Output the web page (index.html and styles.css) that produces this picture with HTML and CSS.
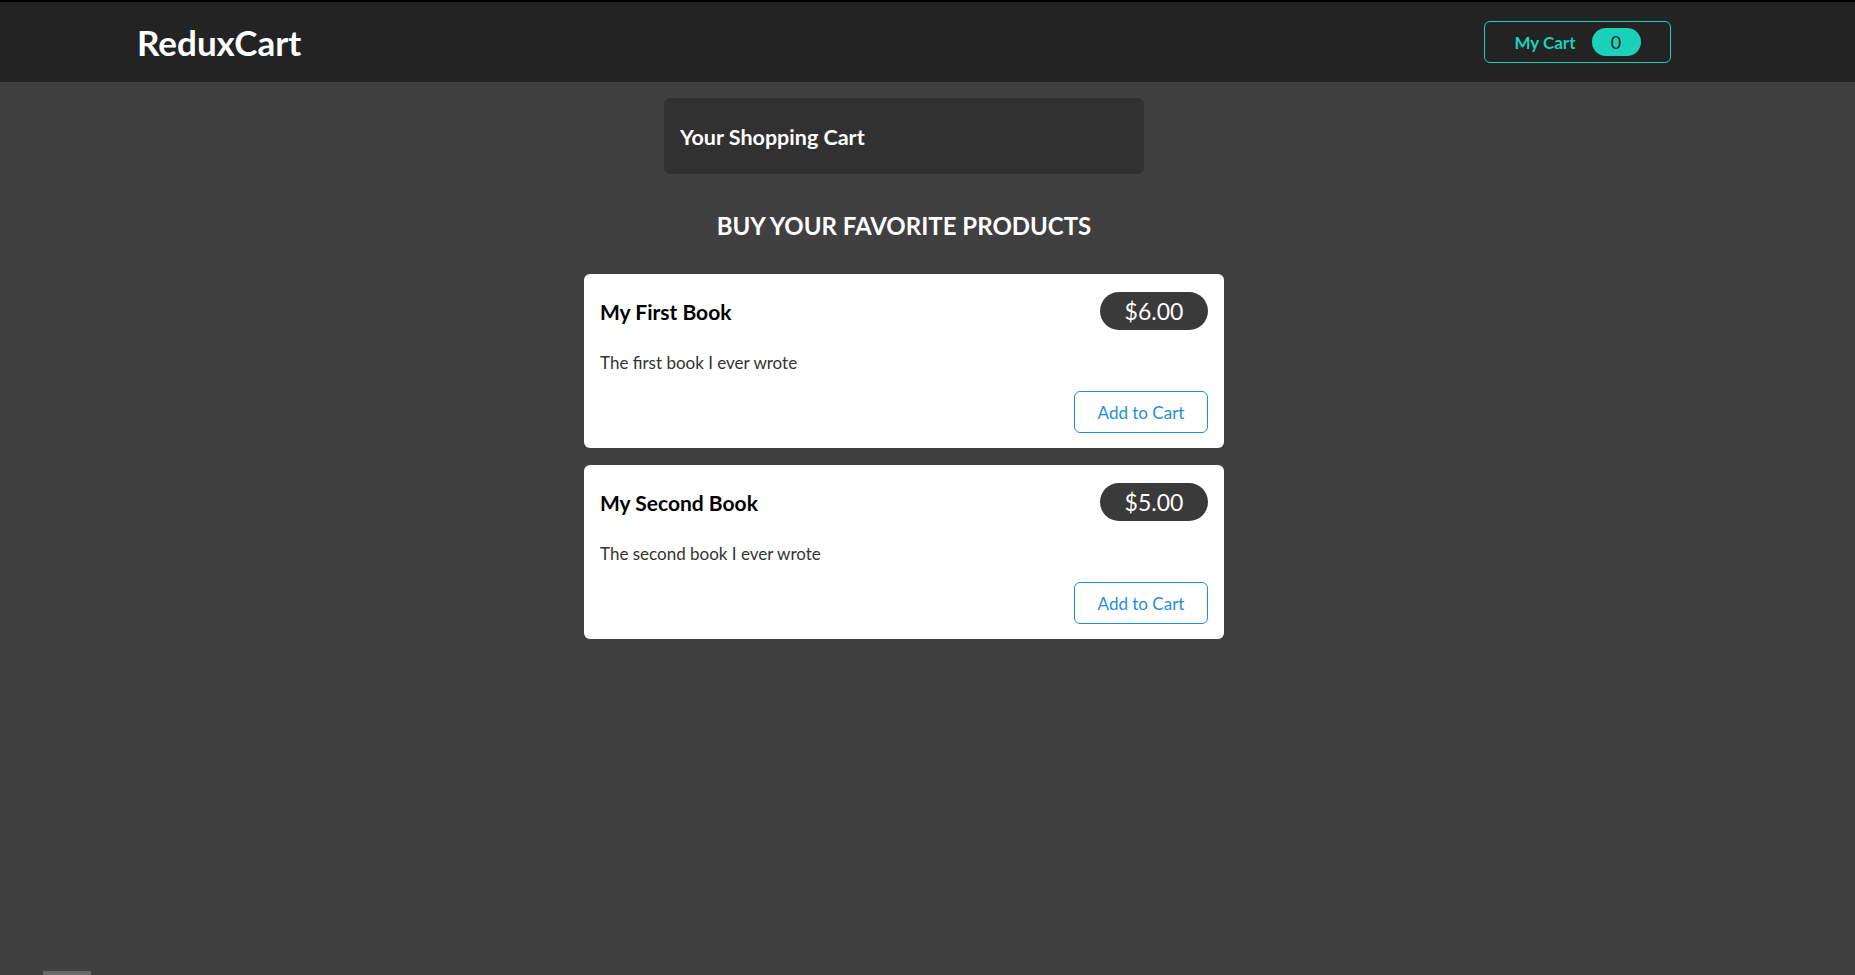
FILE: index.html
```html
<!DOCTYPE html>
<html lang="en">
<head>
<meta charset="utf-8">
<title>ReduxCart</title>
<link rel="stylesheet" href="styles.css">
</head>
<body>
<div class="shell">
  <header class="header">
    <div class="header-inner">
      <h1 class="logo">ReduxCart</h1>
      <button class="cart-button">
        <span>My Cart</span>
        <span class="cart-badge">0</span>
      </button>
    </div>
  </header>
  <main class="main">
    <section class="cart-box">
      <h2>Your Shopping Cart</h2>
    </section>
    <section class="products">
      <h2 class="products-title">BUY YOUR FAVORITE PRODUCTS</h2>
      <ul class="product-list">
        <li class="card">
          <div class="card-head">
            <h3>My First Book</h3>
            <div class="price">$6.00</div>
          </div>
          <p class="desc">The first book I ever wrote</p>
          <div class="actions"><button class="add-btn">Add to Cart</button></div>
        </li>
        <li class="card">
          <div class="card-head">
            <h3>My Second Book</h3>
            <div class="price">$5.00</div>
          </div>
          <p class="desc">The second book I ever wrote</p>
          <div class="actions"><button class="add-btn">Add to Cart</button></div>
        </li>
      </ul>
    </section>
  </main>
</div>
<div class="corner-tab"></div>
</body>
</html>
```
FILE: styles.css
```css
* { box-sizing: border-box; }
html, body { margin: 0; padding: 0; }
body {
  background: #404040;
  font-family: Lato, "Liberation Sans", sans-serif;
  min-height: 975px;
}
.shell { width: 1808px; }
.header {
  background: #232323;
  border-top: 2px solid #000;
  height: 82px;
  width: 1855px;
}
.header-inner {
  width: 1534px;
  margin-left: 137px;
  height: 100%;
  display: flex;
  align-items: center;
  justify-content: space-between;
}
.logo {
  margin: 0;
  color: #fff;
  font-size: 35px;
  font-weight: 700;
}
.cart-button {
  width: 187px;
  height: 42px;
  background: transparent;
  border: 1px solid #1ad1b9;
  border-radius: 6px;
  color: #1ad1b9;
  font-family: inherit;
  font-size: 17px;
  font-weight: 700;
  display: flex;
  align-items: center;
  justify-content: center;
  gap: 16px;
  padding: 0;
}
.cart-badge {
  background: #1ad1b9;
  color: #232323;
  border-radius: 14px;
  width: 49px;
  height: 28px;
  display: flex;
  align-items: center;
  justify-content: center;
  font-weight: 400;
  font-size: 18px;
}
.main {
  display: flex;
  flex-direction: column;
  align-items: center;
}
.cart-box {
  margin-top: 16px;
  width: 480px;
  height: 76px;
  background: #313131;
  border-radius: 6px;
  padding: 2px 16px 0;
  display: flex;
  align-items: center;
}
.cart-box h2 {
  margin: 0;
  color: #fff;
  font-size: 21.5px;
  font-weight: 700;
}
.products {
  width: 640px;
  display: flex;
  flex-direction: column;
  align-items: center;
}
.products-title {
  margin: 36px 0 32px;
  color: #fff;
  font-size: 24px;
  font-weight: 700;
  line-height: 32px;
}
.product-list {
  list-style: none;
  margin: 0;
  padding: 0;
  width: 640px;
  display: flex;
  flex-direction: column;
  gap: 17px;
}
.card {
  background: #fff;
  border-radius: 6px;
  padding: 18px 16px 15px;
  height: 174px;
}
.card-head {
  display: flex;
  justify-content: space-between;
  align-items: center;
}
.card-head h3 {
  margin: 0;
  font-size: 21px;
  font-weight: 700;
  color: #000;
}
.price {
  background: #3a3a3a;
  color: #fff;
  border-radius: 19px;
  width: 108px;
  height: 38px;
  display: flex;
  align-items: center;
  justify-content: center;
  font-size: 23px;
}
.desc {
  margin: 20px 0 0;
  color: #333;
  font-size: 17px;
  line-height: 25px;
}
.actions {
  display: flex;
  justify-content: flex-end;
  margin-top: 16px;
}
.add-btn {
  width: 134px;
  height: 42px;
  background: #fff;
  border: 1px solid #1f8fd6;
  border-radius: 6px;
  color: #1f8fd6;
  font-family: inherit;
  font-size: 17px;
  padding: 0;
}
.corner-tab {
  position: fixed;
  left: 43px;
  bottom: 0;
  width: 48px;
  height: 4px;
  background: #6a6868;
}
```
